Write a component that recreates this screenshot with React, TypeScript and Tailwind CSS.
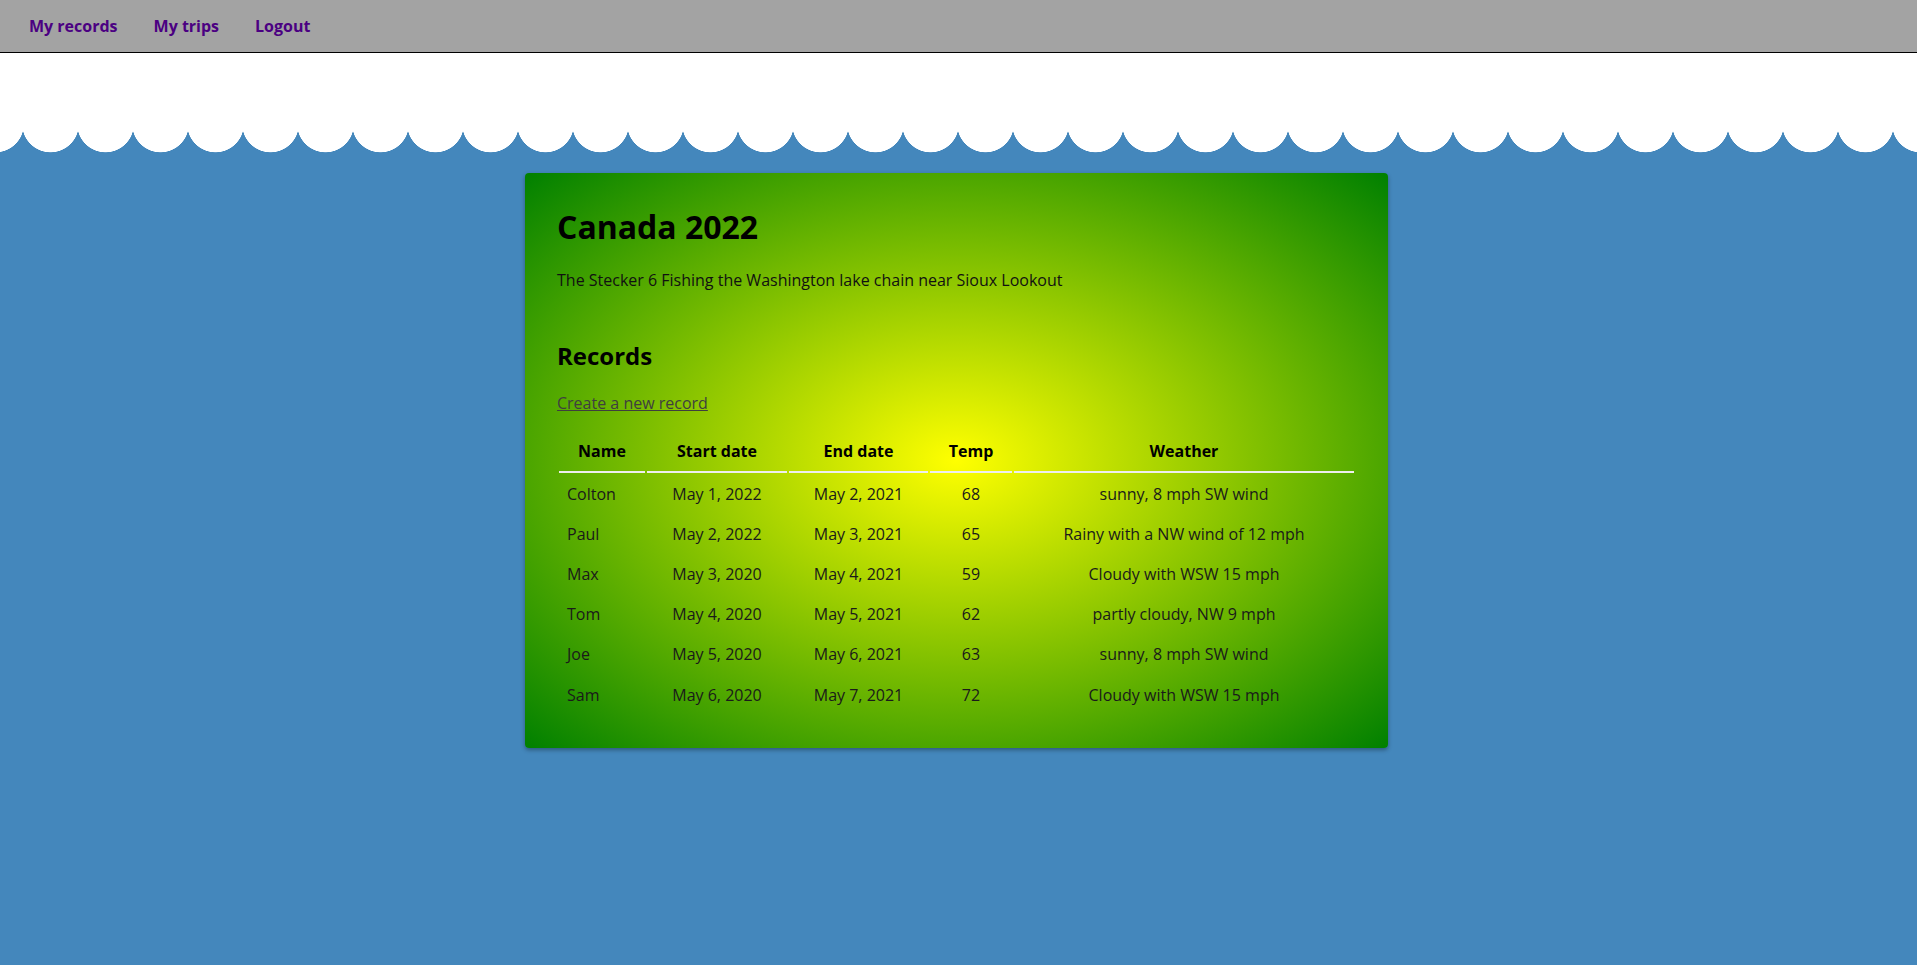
const records = [
  { name: "Colton", start: "May 1, 2022", end: "May 2, 2021", temp: 68, weather: "sunny, 8 mph SW wind" },
  { name: "Paul",   start: "May 2, 2022", end: "May 3, 2021", temp: 65, weather: "Rainy with a NW wind of 12 mph" },
  { name: "Max",    start: "May 3, 2020", end: "May 4, 2021", temp: 59, weather: "Cloudy with WSW 15 mph" },
  { name: "Tom",    start: "May 4, 2020", end: "May 5, 2021", temp: 62, weather: "partly cloudy, NW 9 mph" },
  { name: "Joe",    start: "May 5, 2020", end: "May 6, 2021", temp: 63, weather: "sunny, 8 mph SW wind" },
  { name: "Sam",    start: "May 6, 2020", end: "May 7, 2021", temp: 72, weather: "Cloudy with WSW 15 mph" },
];

const navLinks = ["My records", "My trips", "Logout"];

export default function App() {
  return (
    <div className="min-h-screen bg-[#4487bc] font-['Open_Sans',sans-serif] text-black">
      {/* Top bar */}
      <nav className="flex h-[53px] items-center gap-9 border-b border-black bg-[#a3a3a3] pl-[29px]">
        {navLinks.map((l) => (
          <a key={l} href="#" className="text-base font-bold text-[#4b0082]">
            {l}
          </a>
        ))}
      </nav>

      {/* White band with scalloped edge */}
      <div className="h-[71px] bg-white" />
      <div className="h-[30px] bg-[radial-gradient(circle_at_50%_0,#ffffff_28px,transparent_28.6px)] bg-size-[55px_30px] bg-position-[23px_0] bg-repeat-x" />

      <main className="pt-[19px] pb-10">
        <section className="mx-auto w-[863px] -translate-x-[2px] rounded-[4px] bg-[radial-gradient(yellow,green)] px-8 pt-8 pb-8 shadow-[0_2px_4px_rgba(0,0,0,0.35)]">
          <h1 className="text-[32px] leading-[44px] font-bold">Canada 2022</h1>
          <p className="mt-[19px] text-base leading-6 text-[#111]">
            The Stecker 6 Fishing the Washington lake chain near Sioux Lookout
          </p>

          <h2 className="mt-12 text-2xl leading-8 font-bold">Records</h2>
          <a href="#" className="mt-[19px] inline-block text-base leading-6 text-[#3f3f3f] underline">
            Create a new record
          </a>

          <table className="mt-[14px] w-full table-fixed border-separate border-spacing-0.5 text-base">
            <thead>
              <tr>
                <th className="w-[86px] border-b-2 border-[#eeeeee] py-2 font-bold leading-6">Name</th>
                <th className="w-[140px] border-b-2 border-[#eeeeee] py-2 font-bold leading-6">Start date</th>
                <th className="w-[139px] border-b-2 border-[#eeeeee] py-2 font-bold leading-6">End date</th>
                <th className="w-[82px] border-b-2 border-[#eeeeee] py-2 font-bold leading-6">Temp</th>
                <th className="border-b-2 border-[#eeeeee] py-2 font-bold leading-6">Weather</th>
              </tr>
            </thead>
            <tbody className="text-[#1a1a1a]">
              {records.map((r) => (
                <tr key={r.name} className="h-[38.1px]">
                  <td className="px-2 text-left leading-6">{r.name}</td>
                  <td className="text-center leading-6">{r.start}</td>
                  <td className="text-center leading-6">{r.end}</td>
                  <td className="text-center leading-6">{r.temp}</td>
                  <td className="text-center leading-6">{r.weather}</td>
                </tr>
              ))}
            </tbody>
          </table>
        </section>
      </main>
    </div>
  );
}
